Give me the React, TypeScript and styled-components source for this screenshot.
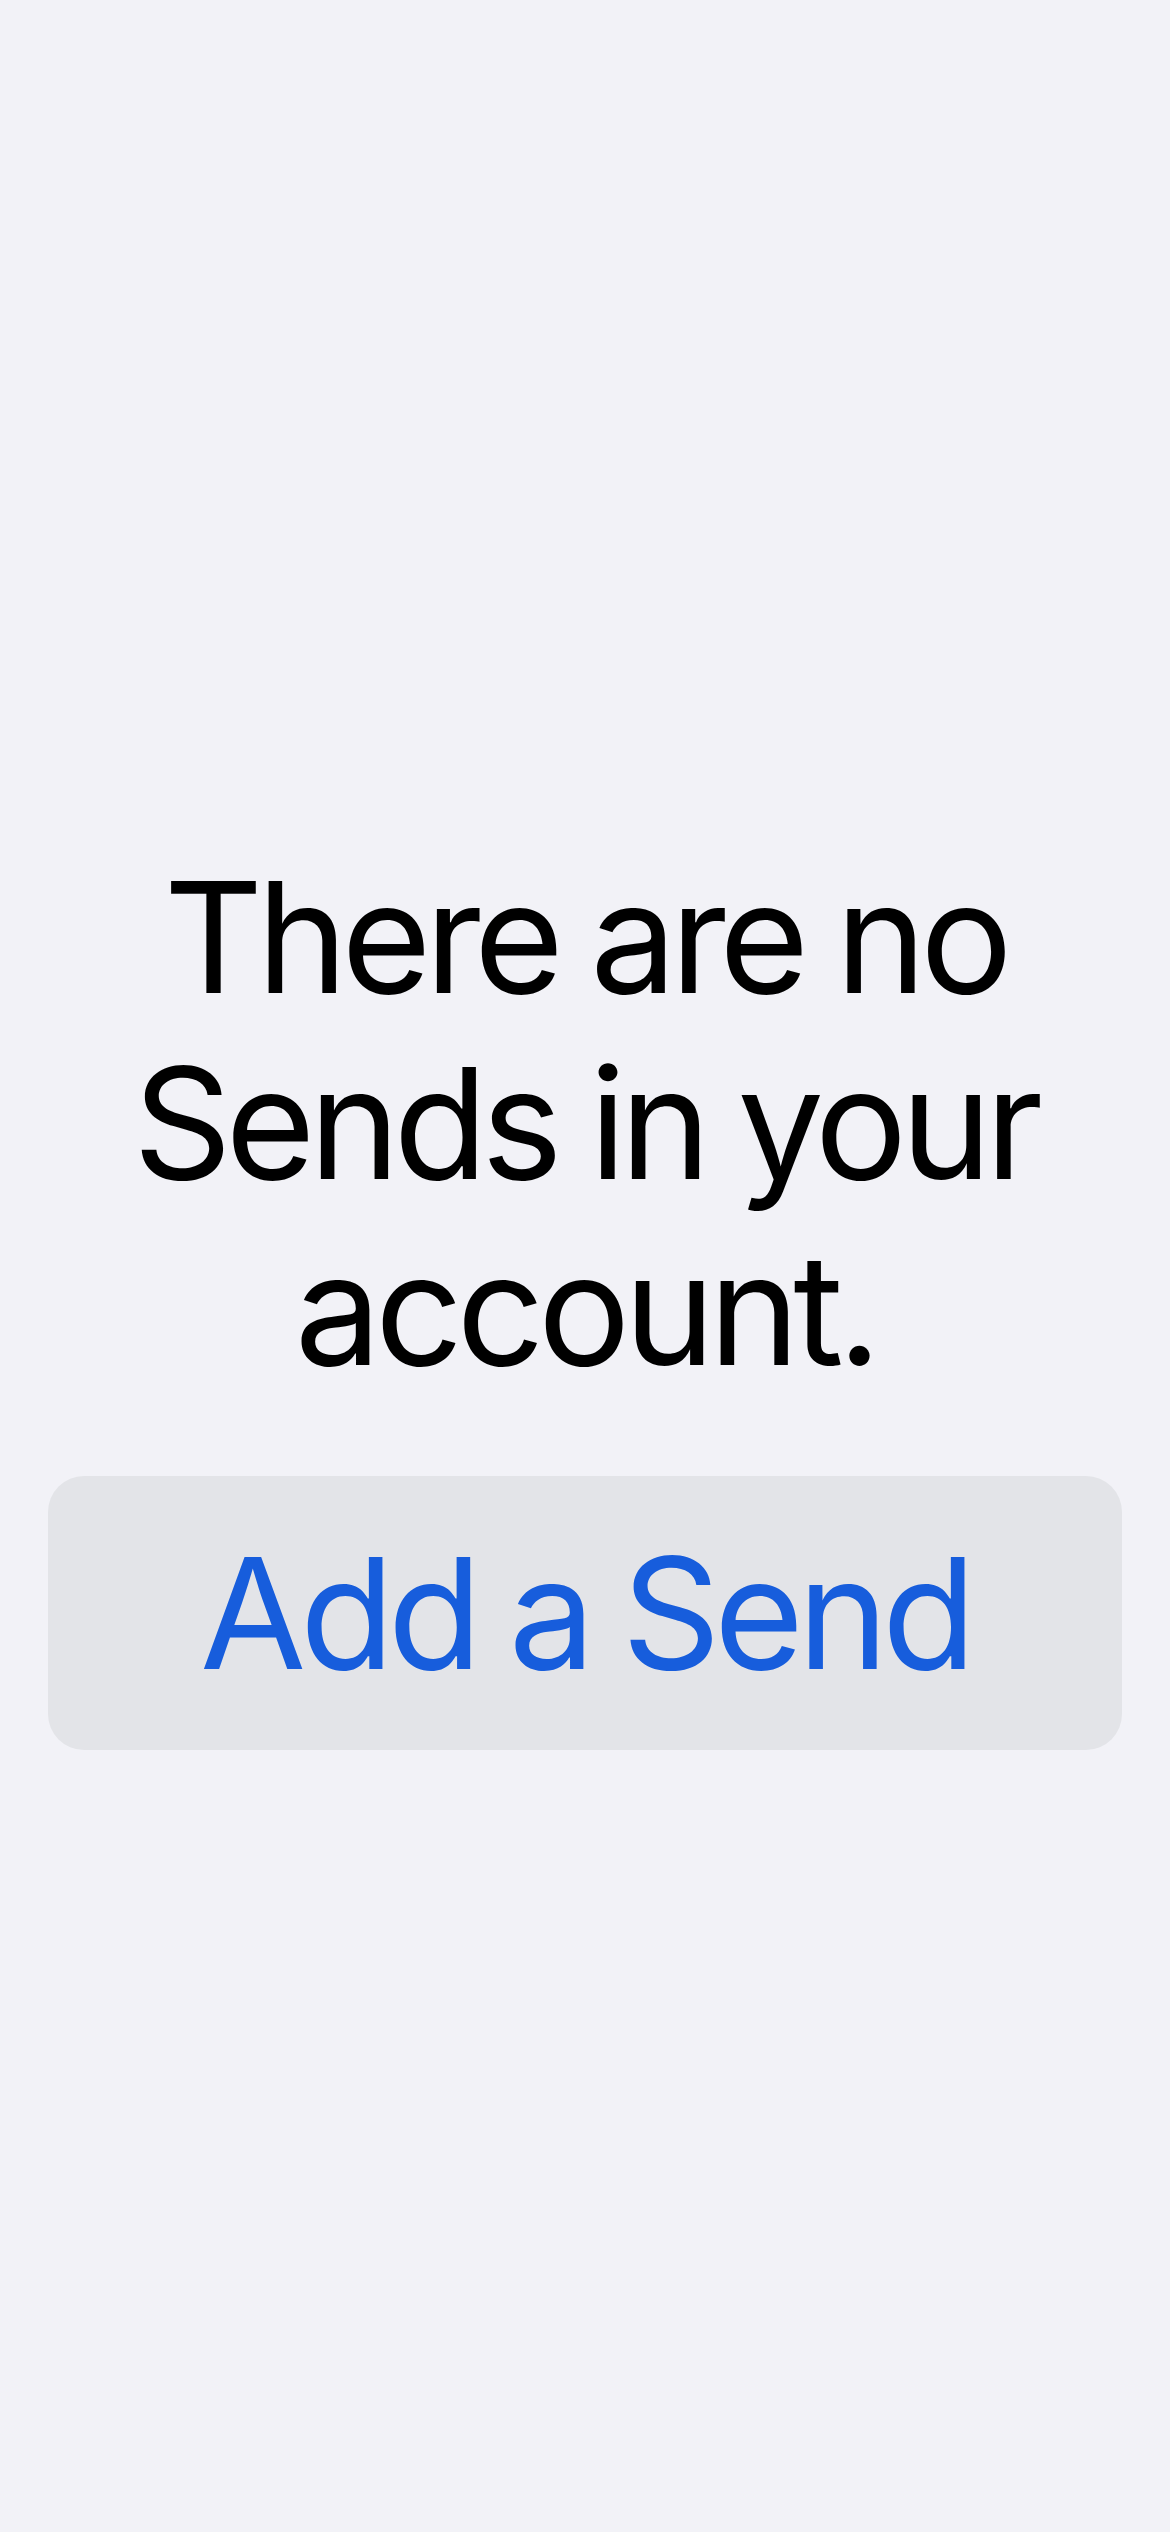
import React from "react";
import styled, { createGlobalStyle } from "styled-components";

const GlobalStyle = createGlobalStyle`
  html, body {
    margin: 0;
    padding: 0;
    background: #f2f2f7;
  }
  body {
    font-family: Inter, "Noto Sans", "Liberation Sans", sans-serif;
  }
`;

const Screen = styled.div`
  width: 1170px;
  height: 2532px;
  background: #f2f2f7;
  display: flex;
  flex-direction: column;
  align-items: stretch;
  padding: 844px 48px 0;
  box-sizing: border-box;
`;

const Message = styled.p`
  margin: 0;
  font-size: 154px;
  line-height: 186px;
  font-weight: 400;
  color: #000;
  text-align: center;
  letter-spacing: -6.4px;
  word-spacing: -4px;
`;

const ActionButton = styled.button`
  margin-top: 74px;
  height: 274px;
  border: none;
  border-radius: 36px;
  background: #e3e4e8;
  color: #175ddc;
  font-family: inherit;
  font-size: 154px;
  line-height: 186px;
  font-weight: 400;
  letter-spacing: -6.4px;
  word-spacing: -4px;
  padding: 0;
  display: flex;
  align-items: center;
  justify-content: center;
  cursor: pointer;
`;

export default function App() {
  return (
    <>
      <GlobalStyle />
      <Screen>
        <Message>
          There are no
          <br />
          Sends in your
          <br />
          account.
        </Message>
        <ActionButton>Add a Send</ActionButton>
      </Screen>
    </>
  );
}
